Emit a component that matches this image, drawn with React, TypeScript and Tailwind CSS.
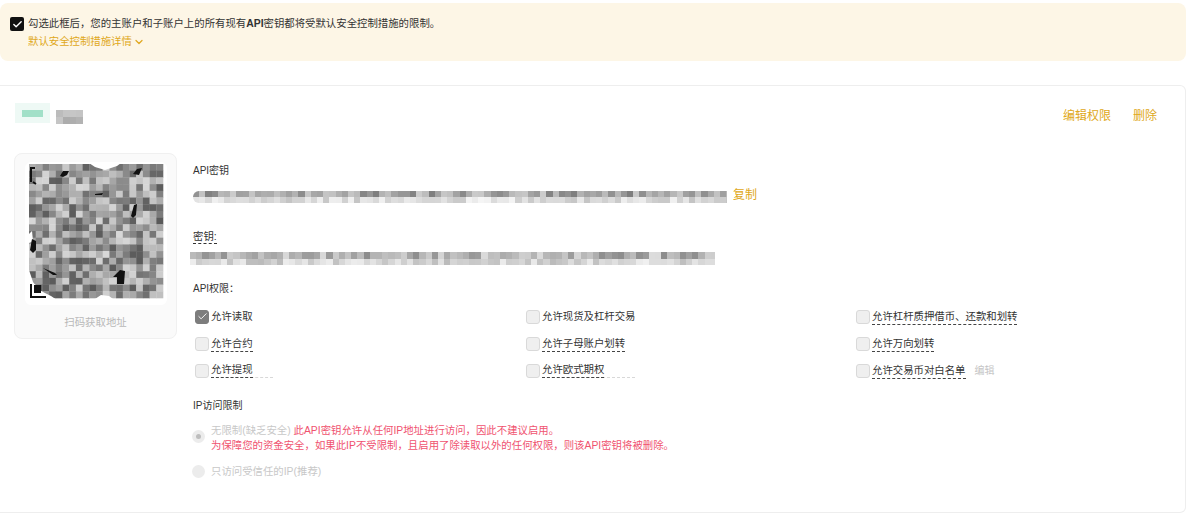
import { Check, ChevronDown } from 'lucide-react'

const cjk = { fontFamily: '"Liberation Sans", "Noto Sans CJK SC", sans-serif' }

// small seeded generator so the mosaics stay the same on each render
function grays(seed: number, count: number, low: number, high: number) {
  const out: string[] = []
  let s = seed
  for (let i = 0; i < count; i++) {
    s = (s * 1103515245 + 12345) % 2147483648
    const v = Math.round(low + ((s >> 8) % 1000) / 1000 * (high - low))
    out.push(`rgb(${v},${v},${v})`)
  }
  return out
}

function Mosaic({ width, cell, rows, seed, ranges }: { width: number; cell: number; rows: number; seed: number; ranges: [number, number][] }) {
  const cols = Math.ceil(width / cell)
  return (
    <svg width={width} height={rows * ranges.length} className="block blur-[0.35px]" shapeRendering="crispEdges">
      {ranges.map((r, ri) =>
        grays(seed + ri * 77, cols, r[0], r[1]).map((c, i) => (
          <rect key={`${ri}-${i}`} x={i * cell} y={ri * rows} width={cell} height={rows} fill={c} />
        ))
      )}
    </svg>
  )
}

function QrMosaic() {
  const n = 20
  const cell = 6.7
  const colors = grays(4242, n * n, 90, 215)
  return (
    <svg width="135" height="135" viewBox="0 0 135 135" className="block">
      {colors.map((c, i) => (
        <rect key={i} x={(i % n) * cell} y={Math.floor(i / n) * cell} width={cell + 0.3} height={cell + 0.3} fill={c} />
      ))}
      {/* uneven white edge of the mosaic */}
      <path d="M60 -1h32l-4 3-12 4-10-3z" fill="#fff" />
      <path d="M0 106l4 12 6 8 12 6 6 4H0z" fill="#fff" />
      <path d="M0 70l3-3 1 10-4 2z" fill="#fff" />
      <path d="M66 135l6-4 8 1 4 3z" fill="#fff" />
      {/* finder corners that show through the mosaic */}
      <path d="M2 18V4h4M4 18l3 2" fill="none" stroke="#111" strokeWidth="2" />
      <path d="M31 12l3-5 6 0-2 4-4 2z" fill="#111" />
      <path d="M104 10l4-5 5-1-3 7z" fill="#111" />
      <path d="M102 52l3-11 3-1-1 11-3 3z" fill="#111" />
      <path d="M1 86l2-11 4 2 0 9-3 3z" fill="#111" />
      <path d="M14 104l12 5 2 2-4 0z" fill="#111" />
      <path d="M84 113l7-7 5 1-1 13h-7v-7z" fill="#111" />
      <path d="M66 30l8-1-1 2-7 0z" fill="#111" />
      <path d="M2 120v13h15" fill="none" stroke="#111" strokeWidth="2" />
      <rect x="5" y="121" width="7" height="8" fill="#111" />
    </svg>
  )
}

function Perm({ label, checked, line, wide, extra }: { label: string; checked?: boolean; line?: boolean; wide?: string; extra?: string }) {
  return (
    <div className="flex items-center h-[27px]">
      <span className={`flex items-center justify-center w-[14px] h-[14px] rounded-[3px] border ${checked ? 'bg-[#7d7d7d] border-[#7d7d7d]' : 'bg-[#efefef] border-[#d9d9d9]'}`}>
        {checked && <Check size={11} strokeWidth={2} className="text-white" />}
      </span>
      <span className={`ml-[2px] ${wide ?? ''} ${wide ? 'border-b border-dashed border-[#d8d8d8]' : ''}`}>
        <span className={`block w-fit -mb-px text-[10.4px] leading-[14px] text-[#333] ${line ? 'border-b border-dashed border-[#444]' : ''}`}>{label}</span>
      </span>
      {extra && <span className="ml-[9px] text-[10px] text-[#c4c4c4]">{extra}</span>}
    </div>
  )
}

export default function App() {
  return (
    <div className="w-[1200px] h-[515px] overflow-hidden bg-white pt-[3px] text-[#333]" style={cjk}>
      {/* 提示 */}
      <div className="w-[1186px] h-[58px] rounded-lg bg-[#fdf6e6] pl-[10px] pt-[13px]">
        <div className="flex items-center h-[16px]">
          <span className="flex items-center justify-center w-[14px] h-[14px] rounded-[2px] bg-[#111]">
            <Check size={11} strokeWidth={3} className="text-white" />
          </span>
          <span className="ml-[4px] text-[10.4px] text-[#333]">勾选此框后，您的主账户和子账户上的所有现有<span className="font-semibold">API</span>密钥都将受默认安全控制措施的限制。</span>
        </div>
        <div className="flex items-center ml-[18px] mt-[2px] text-[10.4px] text-[#e0a820]">
          默认安全控制措施详情
          <ChevronDown size={12} strokeWidth={2.5} className="ml-[1px]" />
        </div>
      </div>

      {/* 卡片 */}
      <div className="mt-[24px] w-[1186px] h-[428px] border-t border-r border-b border-[#eeeeee] rounded-r-md">
        <div className="flex items-start justify-between h-[67px] pl-[15px] pr-[28px]">
          <div className="flex items-start pt-[17px]">
            <div className="flex items-center justify-center w-[35px] h-[20px] bg-[#eef9f5]">
              <div className="w-[21px] h-[7px] bg-[#a2e0c8]" />
            </div>
            <div className="ml-[6px] mt-[7px]">
              <Mosaic width={27} cell={6.75} rows={7} seed={58} ranges={[[150, 215], [130, 200]]} />
            </div>
          </div>
          <div className="flex gap-[22px] pt-[21px] text-[12px] text-[#e0a820]">
            <span>编辑权限</span>
            <span>删除</span>
          </div>
        </div>

        <div className="flex pl-[14px]">
          {/* 二维码 */}
          <div className="w-[163px] h-[186px] rounded-lg border border-[#f0f0f0] bg-[#fafafa] flex flex-col items-center pt-[8px]">
            <div className="w-[142px] h-[143px] bg-white rounded-md flex justify-center pt-[2px] pl-[2px]">
              <QrMosaic />
            </div>
            <div className="mt-[10px] text-[10.4px] text-[#b8b8b8]">扫码获取地址</div>
          </div>

          <div className="ml-[16px] flex-1">
            <div className="text-[10px] leading-[14px] mt-[11px]">API密钥</div>
            <div className="flex items-center mt-[10px] h-[14px]">
              <div className="pt-[4px]">
                <div className="overflow-hidden rounded-l-md">
                  <Mosaic width={534} cell={6.2} rows={6} seed={91} ranges={[[125, 205], [195, 245]]} />
                </div>
              </div>
              <span className="ml-[6px] text-[12px] text-[#e0a820]">复制</span>
            </div>
            <div className="mt-[28px] h-[14px] flex">
              <span className="text-[10.4px] leading-[13px] border-b border-dashed border-[#333]">密钥:</span>
            </div>
            <div className="-ml-[3px] mt-[8px]">
              <Mosaic width={525} cell={6.2} rows={6.5} seed={313} ranges={[[140, 220], [185, 240]]} />
            </div>
            <div className="mt-[17px] text-[10px] leading-[14px]">API权限：</div>

            <div className="mt-[7px] ml-[2px] grid grid-cols-[331px_330px_1fr]">
              <Perm label="允许读取" checked />
              <Perm label="允许现货及杠杆交易" />
              <Perm label="允许杠杆质押借币、还款和划转" line />
              <Perm label="允许合约" line />
              <Perm label="允许子母账户划转" line />
              <Perm label="允许万向划转" line />
              <Perm label="允许提现" line wide="w-[62px]" />
              <Perm label="允许欧式期权" line wide="w-[93px]" />
              <Perm label="允许交易币对白名单" line extra="编辑" />
            </div>

            <div className="mt-[15px] text-[10px] leading-[14px]">IP访问限制</div>
            <div className="mt-[10px] flex items-start -ml-[1px]">
              <span className="mt-[7px] flex items-center justify-center w-[13px] h-[13px] rounded-full bg-[#ececec]">
                <span className="w-[5px] h-[5px] rounded-full bg-[#bdbdbd]" />
              </span>
              <div className="ml-[6px] text-[10.4px] leading-[15px] text-[#f0526f]">
                <div><span className="text-[#c8c8c8]">无限制(缺乏安全)</span> 此API密钥允许从任何IP地址进行访问，因此不建议启用。</div>
                <div>为保障您的资金安全，如果此IP不受限制，且启用了除读取以外的任何权限，则该API密钥将被删除。</div>
              </div>
            </div>
            <div className="mt-[11px] flex items-center -ml-[1px]">
              <span className="w-[13px] h-[13px] rounded-full bg-[#ececec]" />
              <span className="ml-[6px] text-[10.4px] text-[#c8c8c8]">只访问受信任的IP(推荐)</span>
            </div>
          </div>
        </div>
      </div>
    </div>
  )
}
